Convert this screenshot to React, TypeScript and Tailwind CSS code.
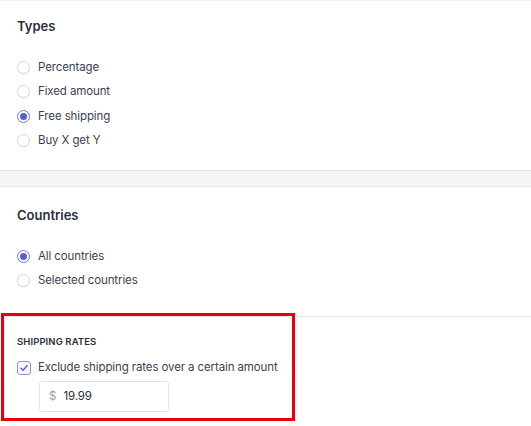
import React from 'react';

const Radio = ({ checked, label }: { checked?: boolean; label: string }) => (
  <label className="flex items-center h-[24.5px] gap-[8px] pl-[17px]">
    <span
      className={
        checked
          ? 'w-[13px] h-[13px] rounded-full border border-[#6f79cf] bg-white flex items-center justify-center'
          : 'w-[13px] h-[13px] rounded-full border border-[#d3d6db] bg-white shadow-[0_1px_1px_rgba(0,0,0,0.05)]'
      }
    >
      {checked && <span className="w-[7px] h-[7px] rounded-full bg-[#5563c9]" />}
    </span>
    <span className="text-[11.5px] tracking-[-0.01em] text-[#3c4250]">{label}</span>
  </label>
);

export default function App() {
  return (
    <div className="w-[531px] h-[426px] bg-white relative overflow-hidden" style={{ fontFamily: 'Inter, "Noto Sans", sans-serif' }}>
      {/* types */}
      <div className="border-t border-[#eef0f2] border-b border-b-[#e3e6ea] pt-[15px] pb-[17px]">
        <h2 className="pl-[17px] text-[13px] leading-5 font-semibold text-[#2a2f3a]">Types</h2>
        <div className="mt-[19px] flex flex-col">
          <Radio label="Percentage" />
          <Radio label="Fixed amount" />
          <Radio checked label="Free shipping" />
          <Radio label="Buy X get Y" />
        </div>
      </div>

      <div className="h-[16px] bg-[#f4f5f7] border-b border-[#e6e8eb]" />

      {/* countries */}
      <div className="pt-[18px] pb-[23px] border-b border-[#e6e8eb]">
        <h2 className="pl-[17px] text-[13px] leading-5 font-semibold text-[#2a2f3a]">Countries</h2>
        <div className="mt-[19px] flex flex-col">
          <Radio checked label="All countries" />
          <Radio label="Selected countries" />
        </div>
      </div>

      {/* shipping rates */}
      <div className="pt-[17px] pl-[17px]">
        <div className="text-[9.5px] leading-4 font-semibold tracking-[0.01em] text-[#2a2f3a]">SHIPPING RATES</div>
        <label className="mt-[8px] flex items-center gap-[7px] h-[20px]">
          <span className="w-[14px] h-[14px] rounded-[3px] border border-[#8d95d6] bg-[#f7f7fd] flex items-center justify-center">
            <svg width="10" height="10" viewBox="0 0 10 10" fill="none">
              <path d="M2 5.2 L4.1 7.2 L8 2.8" stroke="#5563c9" strokeWidth="1.5" strokeLinecap="round" strokeLinejoin="round" />
            </svg>
          </span>
          <span className="text-[11.5px] tracking-[-0.01em] text-[#3c4250]">Exclude shipping rates over a certain amount</span>
        </label>
        <div className="mt-[3px] ml-[22px] w-[130px] h-[31px] border border-[#dfe2e6] rounded-[3px] flex items-center px-[9px] gap-[7px]">
          <span className="text-[11.5px] text-[#9aa0aa]">$</span>
          <span className="text-[11.5px] tracking-[-0.01em] text-[#2a2f3a]">19.99</span>
        </div>
      </div>

      {/* annotation box */}
      <div className="absolute left-[1px] top-[313px] w-[294px] h-[108px] border-[3px] border-[#e8000b]" />
    </div>
  );
}
